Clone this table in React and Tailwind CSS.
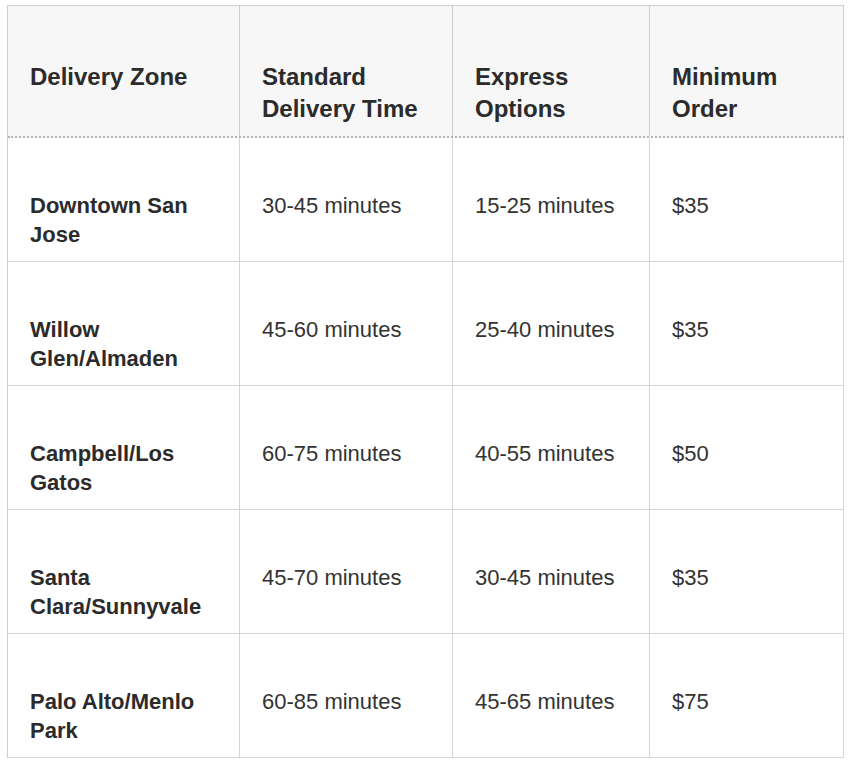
import React from "react";

const rows = [
  ["Downtown San Jose", "30-45 minutes", "15-25 minutes", "$35"],
  ["Willow Glen/Almaden", "45-60 minutes", "25-40 minutes", "$35"],
  ["Campbell/Los Gatos", "60-75 minutes", "40-55 minutes", "$50"],
  ["Santa Clara/Sunnyvale", "45-70 minutes", "30-45 minutes", "$35"],
  ["Palo Alto/Menlo Park", "60-85 minutes", "45-65 minutes", "$75"],
];

const headers = ["Delivery Zone", "Standard Delivery Time", "Express Options", "Minimum Order"];

export default function App() {
  const cols = "grid grid-cols-[232px_213px_197px_194px]";
  return (
    <div className="min-h-[763px] w-[849px] bg-white pt-[5px] pl-[7px] text-[#333] font-['Liberation_Sans',Arial,sans-serif]">
      <div className="w-[837px] border-l border-t border-[#cfcfcf]">
        <div className={`${cols} h-[132px] bg-[#f7f7f7] border-b-2 border-dotted border-[#b5b5b5]`}>
          {headers.map((h, i) => (
            <div
              key={i}
              className="border-r border-[#cfcfcf] pl-[22px] pr-[16px] pt-[55px] text-[24px] leading-[32px] font-bold text-[#2b2b2b]"
            >
              {h}
            </div>
          ))}
        </div>
        {rows.map((r, ri) => (
          <div key={ri} className={`${cols} h-[124px] border-b border-[#d4d4d4]`}>
            {r.map((c, ci) => (
              <div
                key={ci}
                className={`border-r border-[#d4d4d4] pl-[22px] pr-[16px] pt-[53px] text-[22px] leading-[29px] ${
                  ci === 0 ? "font-bold text-[#2b2b2b]" : "text-[#333]"
                }`}
              >
                {c}
              </div>
            ))}
          </div>
        ))}
      </div>
    </div>
  );
}
